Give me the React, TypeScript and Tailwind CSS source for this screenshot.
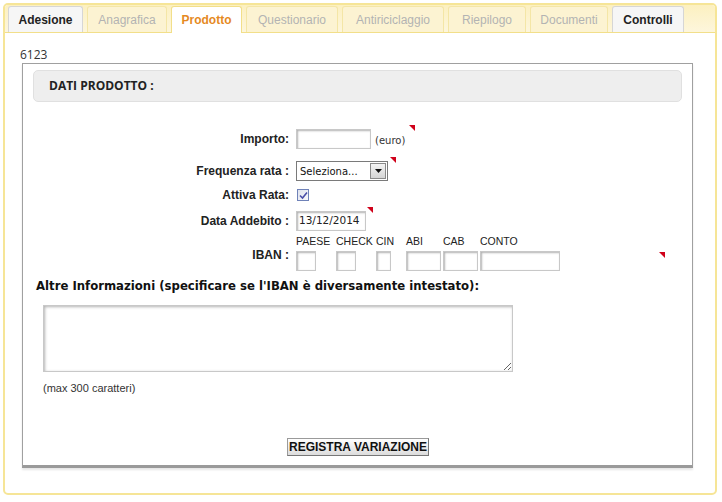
import React from 'react';

const tabs = [
  { label: 'Adesione', w: 'w-[75px]', kind: 'on' },
  { label: 'Anagrafica', w: 'w-[80px]', kind: 'off' },
  { label: 'Prodotto', w: 'w-[71px]', kind: 'active' },
  { label: 'Questionario', w: 'w-[92px]', kind: 'off' },
  { label: 'Antiriciclaggio', w: 'w-[102px]', kind: 'off' },
  { label: 'Riepilogo', w: 'w-[78px]', kind: 'off' },
  { label: 'Documenti', w: 'w-[78px]', kind: 'off' },
  { label: 'Controlli', w: 'w-[72px]', kind: 'on' }
];

const Marker = ({ className = '' }: { className?: string }) => (
  <svg width="6" height="6" viewBox="0 0 6 6" className={className}>
    <polygon points="0,0 6,0 6,6" fill="#d0021b" />
  </svg>
);

const inputCls =
  'h-[20px] border border-[#c8c8c8] bg-white shadow-[inset_1px_1px_2px_rgba(0,0,0,0.3)]';

const App = () => {
  return (
    <div className="w-[722px] h-[502px] bg-white pt-[3px] pl-[3px] font-['Liberation_Sans',Arial,sans-serif] text-[#222]">
      <div className="w-[714px] h-[492px] border-2 border-[#f6e597] rounded-[5px] overflow-hidden">
        {/* Tabs */}
        <div className="h-[28px] bg-gradient-to-b from-[#fcf0c0] to-[#fdf6dc] border-b border-[#f2df8a] flex items-end gap-[4px] pl-[3px]">
          {tabs.map((t) => (
            <div
              key={t.label}
              className={
                t.kind === 'active'
                  ? `${t.w} h-[27px] -mb-px bg-white border border-b-0 border-[#f2df8a] rounded-t-[3px] flex items-center justify-center text-[12px] font-bold text-[#e58a1f]`
                  : t.kind === 'on'
                  ? `${t.w} h-[26px] bg-[#f6f6f6] border border-b-0 border-[#d6d6d6] rounded-t-[3px] flex items-center justify-center text-[12px] font-bold text-[#222]`
                  : `${t.w} h-[26px] bg-[#fcf3d2] border border-b-0 border-[#f4e6a6] rounded-t-[3px] flex items-center justify-center text-[12px] text-[#b3b3b3]`
              }
            >
              {t.label}
            </div>
          ))}
        </div>

        <div className="pl-[15px] pt-[15px] text-[12px] leading-[14px] font-['Open_Sans',sans-serif] text-[#333]">6123</div>

        {/* Panel */}
        <div className="ml-[17px] mt-[1px] w-[671px] h-[405px] border border-[#a0a0a0] border-b-[3px] border-b-[#9a9a9a] shadow-[0_2px_2px_rgba(0,0,0,0.1)] pt-[6px] px-[10px]">
          <div className="h-[32px] bg-[#eeeeee] border border-[#e0e0e0] rounded-[5px] flex items-center pl-[15px] text-[12px] font-bold font-['Open_Sans',sans-serif] text-[#222]">
            DATI PRODOTTO :
          </div>

          <div className="-ml-[10px] mt-[26px] text-[12px] font-bold text-[#222]">
            {/* Importo */}
            <div className="flex items-center h-[22px]">
              <div className="w-[268px] text-right pr-[2px]">Importo:</div>
              <div className="ml-[5px] w-[75px] h-[20px] border border-[#c8c8c8] shadow-[inset_1px_1px_2px_rgba(0,0,0,0.3)]" />
              <span className="ml-[4px] mt-[3px] text-[10px] font-normal font-['DejaVu_Sans',sans-serif] text-[#333]">(euro)</span>
              <Marker className="ml-[4px] self-start -mt-[3px]" />
            </div>

            {/* Frequenza */}
            <div className="flex items-center h-[22px] mt-[10px]">
              <div className="w-[268px] text-right pr-[2px]">Frequenza rata :</div>
              <div className="ml-[5px] w-[92px] h-[20px] border border-[#7a7a7a] bg-white flex items-center pl-[3px] pr-[1px]">
                <span className="flex-1 text-[10px] font-normal font-['DejaVu_Sans',sans-serif] text-[#111]">Seleziona...</span>
                <div className="w-[16px] h-[16px] border border-[#8a8a8a] bg-gradient-to-b from-[#f4f4f4] to-[#d4d4d4] flex items-center justify-center">
                  <svg width="7" height="4" viewBox="0 0 7 4"><polygon points="0,0 7,0 3.5,4" fill="#111" /></svg>
                </div>
              </div>
              <Marker className="ml-[2px] self-start -mt-[3px]" />
            </div>

            {/* Attiva Rata */}
            <div className="flex items-center h-[16px] mt-[5px]">
              <div className="w-[268px] text-right pr-[2px]">Attiva Rata:</div>
              <div className="ml-[6px] w-[12px] h-[12px] border border-[#6f82b8] bg-gradient-to-br from-[#dfe3ee] to-[#f8f8fb] flex items-center justify-center">
                <svg width="9" height="9" viewBox="0 0 9 9"><path d="M1 4.5 L3.5 7 L8 1.5" stroke="#4a4fa8" strokeWidth="1.6" fill="none" /></svg>
              </div>
            </div>

            {/* Data Addebito */}
            <div className="flex items-center h-[22px] mt-[7px]">
              <div className="w-[268px] text-right pr-[2px]">Data Addebito :</div>
              <div className={`ml-[5px] w-[70px] ${inputCls} flex items-center pl-[2px] text-[10.5px] font-normal font-['DejaVu_Sans',sans-serif] text-[#222]`}>
                13/12/2014
              </div>
              <Marker className="ml-[1px] self-start -mt-[3px]" />
            </div>

            {/* IBAN */}
            <div className="flex items-end mt-[2px]">
              <div className="w-[268px] text-right pr-[2px] mb-[7px]">IBAN :</div>
              <div className="ml-[5px] flex items-end font-normal text-[10.5px] text-[#222]">
                <div className="flex flex-col w-[40px]">
                  <span className="leading-[14px] mb-[3px]">PAESE</span>
                  <div className={`w-[20px] ${inputCls}`} />
                </div>
                <div className="flex flex-col w-[40px]">
                  <span className="leading-[14px] mb-[3px]">CHECK</span>
                  <div className={`w-[20px] ${inputCls}`} />
                </div>
                <div className="flex flex-col w-[30px]">
                  <span className="leading-[14px] mb-[3px]">CIN</span>
                  <div className={`w-[15px] ${inputCls}`} />
                </div>
                <div className="flex flex-col w-[37px]">
                  <span className="leading-[14px] mb-[3px]">ABI</span>
                  <div className={`w-[35px] ${inputCls}`} />
                </div>
                <div className="flex flex-col w-[37px]">
                  <span className="leading-[14px] mb-[3px]">CAB</span>
                  <div className={`w-[35px] ${inputCls}`} />
                </div>
                <div className="flex flex-col w-[80px]">
                  <span className="leading-[14px] mb-[3px]">CONTO</span>
                  <div className={`w-[80px] ${inputCls}`} />
                </div>
              </div>
              <Marker className="ml-auto mr-[17px] mb-[13px]" />
            </div>
          </div>

          <div className="mt-[7px] ml-[3px] text-[11.7px] font-bold font-['DejaVu_Sans',sans-serif] text-[#111]">
            Altre Informazioni (specificare se l'IBAN è diversamente intestato):
          </div>

          <textarea className="block mt-[9px] ml-[10px] w-[470px] h-[67px] border border-[#c8c8c8] shadow-[inset_1px_1px_3px_rgba(0,0,0,0.3)] outline-none" />

          <div className="mt-[8px] ml-[10px] text-[11px] text-[#333]">(max 300 caratteri)</div>

          <div className="mt-[42px] flex">
            <button className="ml-[254px] w-[142px] h-[18px] border border-[#9a9a9a] border-r-[#777] border-b-[#777] bg-gradient-to-b from-[#ffffff] to-[#dcdcdc] text-[12px] font-bold text-[#111] leading-[16px]">
              REGISTRA VARIAZIONE
            </button>
          </div>
        </div>
      </div>
    </div>
  );
};

export default App;
